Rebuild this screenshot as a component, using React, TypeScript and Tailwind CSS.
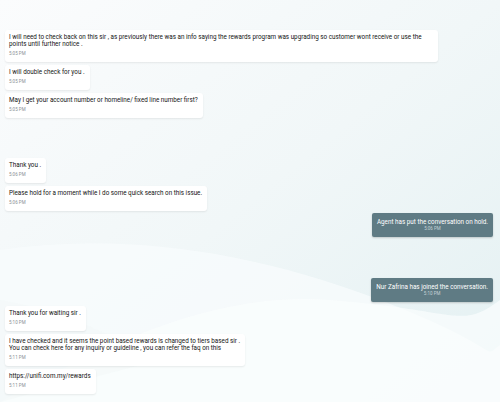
import React from "react";

type Msg = {
  id: number;
  from: "customer" | "system";
  lines: string[];
  time: string;
  gap?: string;
  width?: string;
};

const messages: Msg[] = [
  {
    id: 1,
    from: "customer",
    lines: [
      "I will need to check back on this sir , as previously there was an info saying the rewards program was upgrading so customer wont receive or use the",
      "points until further notice .",
    ],
    time: "5:05 PM",
    width: "w-[433px]",
  },
  { id: 2, from: "customer", lines: ["I will double check for you ."], time: "5:05 PM" },
  {
    id: 3,
    from: "customer",
    lines: ["May I get your account number or homeline/ fixed line number first?"],
    time: "5:05 PM",
  },
  { id: 4, from: "customer", lines: ["Thank you ."], time: "5:06 PM", gap: "mt-[40px]" },
  {
    id: 5,
    from: "customer",
    lines: ["Please hold for a moment while I do some quick search on this issue."],
    time: "5:06 PM",
  },
  { id: 6, from: "system", lines: ["Agent has put the conversation on hold."], time: "5:06 PM", gap: "mt-[2px]" },
  {
    id: 7,
    from: "system",
    lines: ["Nur Zafrina has joined the conversation."],
    time: "5:10 PM",
    gap: "mt-[41px]",
  },
  { id: 8, from: "customer", lines: ["Thank you for waiting sir ."], time: "5:10 PM", gap: "mt-[4px]" },
  {
    id: 9,
    from: "customer",
    lines: [
      "I have checked and it seems the point based rewards is changed to tiers based sir .",
      "You can check here for any inquiry or guideline , you can refer the faq on this",
    ],
    time: "5:11 PM",
  },
  { id: 10, from: "customer", lines: ["https://unifi.com.my/rewards"], time: "5:11 PM" },
];

function Bubble({ msg }: { msg: Msg }) {
  const gap = msg.gap ?? "mt-[3px]";
  if (msg.from === "system") {
    return (
      <div className={`flex justify-end pr-[7px] ${gap}`}>
        <div className="rounded-[2px] bg-[#5f7b84] px-[5px] pt-[6px] pb-[5px] text-center shadow-[0_1px_2px_rgba(0,0,0,0.18)]">
          <p className="whitespace-nowrap text-[6.3px] leading-[7px] text-white">{msg.lines[0]}</p>
          <p className="text-[4.5px] leading-[6px] text-[#c5d3d7]">{msg.time}</p>
        </div>
      </div>
    );
  }
  return (
    <div className={`flex justify-start pl-[5px] ${gap}`}>
      <div
        className={`rounded-[3px] bg-white pl-[4px] pr-[5px] pt-[4px] pb-[5px] shadow-[0_1px_2px_rgba(0,0,0,0.08)] ${msg.width ?? ""}`}
      >
        {msg.lines.map((l, i) => (
          <p key={i} className="whitespace-nowrap text-[6.3px] leading-[7px] text-[#141414]">
            {l}
          </p>
        ))}
        <p className="mt-[3px] text-[4.5px] leading-[6px] text-[#8a8f94]">{msg.time}</p>
      </div>
    </div>
  );
}

export default function App() {
  return (
    <div
      className="relative h-[402px] w-[500px] overflow-hidden bg-gradient-to-br from-[#fbfcfd] via-[#f1f7f8] to-[#e3f0f2]"
      style={{ fontFamily: "Roboto, 'Liberation Sans', sans-serif" }}
    >
      {/* wave background */}
      <svg className="absolute inset-0" width="500" height="402" viewBox="0 0 500 402">
        <path
          d="M0 250 C 120 232, 250 250, 380 300 S 480 360, 500 345 L500 402 L0 402 Z"
          fill="#f8fbfc"
          opacity="0.8"
        />
        <path
          d="M0 402 C 80 360, 200 290, 330 300 S 460 330, 500 300 L500 402 Z"
          fill="#fbfdfd"
          opacity="0.7"
        />
        <path d="M0 300 C 60 310, 100 330, 160 360 L 0 402 Z" fill="#f3f8f9" opacity="0.6" />
      </svg>

      <div className="relative flex flex-col pt-[27px]">
        {messages.map((m) => (
          <Bubble key={m.id} msg={m} />
        ))}
      </div>
    </div>
  );
}
